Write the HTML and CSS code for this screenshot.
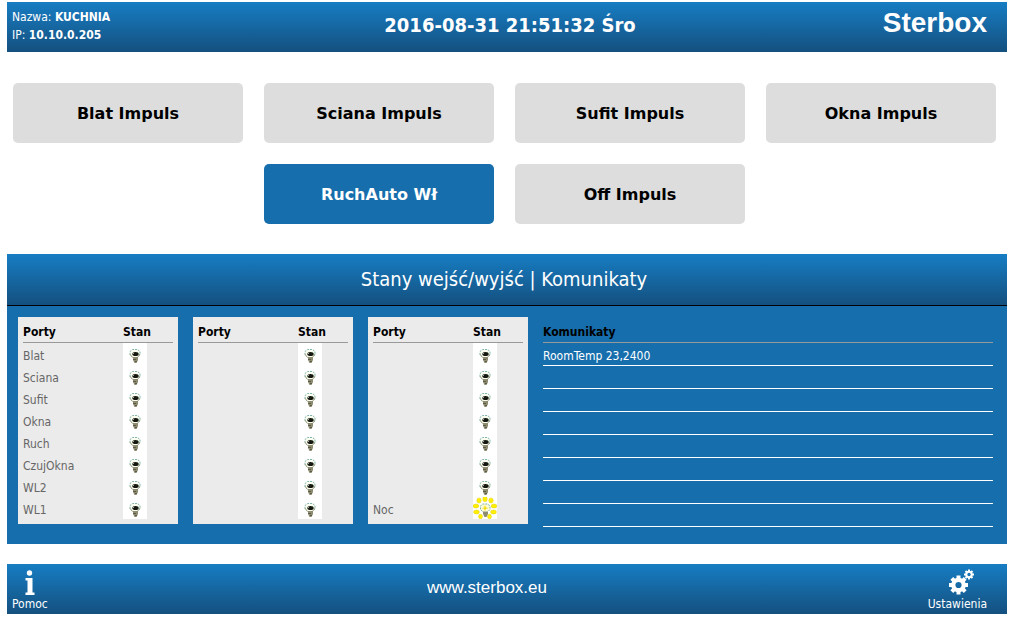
FILE: index.html
```html
<!DOCTYPE html>
<html lang="pl">
  <head>
    <meta charset="UTF-8" />
    <title>Sterbox - KUCHNIA</title>
    <link rel="stylesheet" href="styles.css">
  </head>
  <body>
    <!-- Bulb icons used in the port tables -->
    <svg class="icon-defs" aria-hidden="true">
      <symbol id="bulb" viewBox="0 -2 24 22">
        <path d="M9 12 L7 10 V6.500 L9.500 4.500 H14.500 L17 6.500 V10 L15 12" fill="#fbfdf0" stroke="#7fb5ad" stroke-dasharray="2 1" />
        <path d="M7 9 L9.500 12.500 H14.500 L17 9" fill="none" stroke="#aaa98c" />
        <ellipse cx="12.500" cy="9" rx="3.200" ry="2" fill="#15180f" />
        <path d="M10 9 l1 -1" stroke="#aaa" />
        <path d="M10 12 H15 V15 L13.500 18 H11.500 L10 15 Z" fill="#8d8b70" />
        <path d="M10 14.500 H13 M12 16.500 H14" stroke="#5c5b48" />
      </symbol>
      <symbol id="bulb-on" viewBox="0 0 24 22">
        <g fill="#fff000" stroke="#e3cf20" stroke-width="0.5">
          <ellipse cx="12" cy="2" rx="2.200" ry="2.800" />
          <ellipse cx="6" cy="3.500" rx="2.200" ry="2.600" />
          <ellipse cx="18" cy="3.500" rx="2.200" ry="2.600" />
          <ellipse cx="3" cy="9" rx="2.900" ry="2" />
          <ellipse cx="21" cy="9" rx="2.900" ry="2" />
          <ellipse cx="3.500" cy="15" rx="2.900" ry="2" />
          <ellipse cx="20.500" cy="15" rx="2.900" ry="2" />
          <ellipse cx="7.500" cy="19.500" rx="2" ry="2.300" />
          <ellipse cx="16.500" cy="19.500" rx="2" ry="2.300" />
        </g>
        <path d="M9.500 14.500 L7.500 12.500 V9 L9.500 7 H14.500 L17 9 V12.500 L15 14.500" fill="#fffbd0" stroke="#7fb5ad" stroke-dasharray="2 1" />
        <path d="M12 8 L13 10.500 L15.500 11 L13 12 L12 14 L11 12 L9 11 L11 10.500 Z" fill="#f2df1c" />
        <path d="M10 14.500 H15 V17 L13.500 20 H11.500 L10 17 Z" fill="#8d8b70" />
      </symbol>
    </svg>

    <header class="bar top-bar">
      <div class="device">
        <div>Nazwa: <b>KUCHNIA</b></div>
        <div>IP: <b>10.10.0.205</b></div>
      </div>
      <div class="clock">2016-08-31 21:51:32 Śro</div>
      <div class="brand">Sterbox</div>
    </header>

    <main>
      <div class="buttons">
        <button type="button" class="tile">Blat Impuls</button>
        <button type="button" class="tile">Sciana Impuls</button>
        <button type="button" class="tile">Sufit Impuls</button>
        <button type="button" class="tile">Okna Impuls</button>
        <button type="button" class="tile tile-on">RuchAuto Wł</button>
        <button type="button" class="tile">Off Impuls</button>
      </div>

      <section class="status">
        <h2 class="status-title">Stany wejść/wyjść | Komunikaty</h2>
        <div class="status-body">
          <!-- Ports 1-8 -->
          <div class="ports">
            <table>
              <thead>
                <tr><th>Porty</th><th class="state">Stan</th></tr>
              </thead>
              <tbody>
                <tr><td>Blat</td><td class="state"><svg class="bulb"><use href="#bulb" /></svg></td></tr>
                <tr><td>Sciana</td><td class="state"><svg class="bulb"><use href="#bulb" /></svg></td></tr>
                <tr><td>Sufit</td><td class="state"><svg class="bulb"><use href="#bulb" /></svg></td></tr>
                <tr><td>Okna</td><td class="state"><svg class="bulb"><use href="#bulb" /></svg></td></tr>
                <tr><td>Ruch</td><td class="state"><svg class="bulb"><use href="#bulb" /></svg></td></tr>
                <tr><td>CzujOkna</td><td class="state"><svg class="bulb"><use href="#bulb" /></svg></td></tr>
                <tr><td>WL2</td><td class="state"><svg class="bulb"><use href="#bulb" /></svg></td></tr>
                <tr><td>WL1</td><td class="state"><svg class="bulb"><use href="#bulb" /></svg></td></tr>
              </tbody>
            </table>
          </div>

          <!-- Ports 9-16 -->
          <div class="ports">
            <table>
              <thead>
                <tr><th>Porty</th><th class="state">Stan</th></tr>
              </thead>
              <tbody>
                <tr><td></td><td class="state"><svg class="bulb"><use href="#bulb" /></svg></td></tr>
                <tr><td></td><td class="state"><svg class="bulb"><use href="#bulb" /></svg></td></tr>
                <tr><td></td><td class="state"><svg class="bulb"><use href="#bulb" /></svg></td></tr>
                <tr><td></td><td class="state"><svg class="bulb"><use href="#bulb" /></svg></td></tr>
                <tr><td></td><td class="state"><svg class="bulb"><use href="#bulb" /></svg></td></tr>
                <tr><td></td><td class="state"><svg class="bulb"><use href="#bulb" /></svg></td></tr>
                <tr><td></td><td class="state"><svg class="bulb"><use href="#bulb" /></svg></td></tr>
                <tr><td></td><td class="state"><svg class="bulb"><use href="#bulb" /></svg></td></tr>
              </tbody>
            </table>
          </div>

          <!-- Ports 17-24 -->
          <div class="ports">
            <table>
              <thead>
                <tr><th>Porty</th><th class="state">Stan</th></tr>
              </thead>
              <tbody>
                <tr><td></td><td class="state"><svg class="bulb"><use href="#bulb" /></svg></td></tr>
                <tr><td></td><td class="state"><svg class="bulb"><use href="#bulb" /></svg></td></tr>
                <tr><td></td><td class="state"><svg class="bulb"><use href="#bulb" /></svg></td></tr>
                <tr><td></td><td class="state"><svg class="bulb"><use href="#bulb" /></svg></td></tr>
                <tr><td></td><td class="state"><svg class="bulb"><use href="#bulb" /></svg></td></tr>
                <tr><td></td><td class="state"><svg class="bulb"><use href="#bulb" /></svg></td></tr>
                <tr><td></td><td class="state"><svg class="bulb"><use href="#bulb" /></svg></td></tr>
                <tr><td>Noc</td><td class="state"><svg class="bulb"><use href="#bulb-on" /></svg></td></tr>
              </tbody>
            </table>
          </div>

          <table class="messages">
            <thead>
              <tr><th>Komunikaty</th></tr>
            </thead>
            <tbody>
              <tr><td>RoomTemp 23,2400</td></tr>
              <tr><td></td></tr>
              <tr><td></td></tr>
              <tr><td></td></tr>
              <tr><td></td></tr>
              <tr><td></td></tr>
              <tr><td></td></tr>
              <tr><td></td></tr>
            </tbody>
          </table>
        </div>
      </section>
    </main>

    <footer class="bar bottom-bar">
      <a href="#pomoc" class="nav-link help">
        <svg class="nav-icon" viewBox="0 0 34 28" fill="#fff">
          <circle cx="16.500" cy="4" r="2.700" />
          <path d="M12.500 9 H19.500 V23.500 H21.500 V26 H12.500 V23.500 H14.500 V11.500 H12.500 Z" />
        </svg>
        Pomoc
      </a>
      <a href="http://www.sterbox.eu" class="site">www.sterbox.eu</a>
      <a href="#ustawienia" class="nav-link settings">
        <svg class="nav-icon" viewBox="0 0 34 28" fill="none" stroke="#fff">
          <g transform="translate(8 -1)">
            <circle cx="10.500" cy="17" r="5.200" stroke-width="4.200" />
            <path d="M10.500 7.500 V11 M10.500 23 V26.500 M1 17 H4.500 M16.500 17 H20 M3.800 10.300 L6.300 12.800 M14.700 21.200 L17.200 23.700 M3.800 23.700 L6.300 21.200 M14.700 12.800 L17.200 10.300" stroke-width="4" />
            <circle cx="21" cy="6.500" r="2.700" stroke-width="2" />
            <path d="M21 1.500 V3.500 M21 9.500 V11.500 M16 6.500 H18 M24 6.500 H26 M17.500 3 L19 4.500 M23 8.500 L24.500 10 M17.500 10 L19 8.500 M23 4.500 L24.500 3" stroke-width="2" />
          </g>
        </svg>
        Ustawienia
      </a>
    </footer>
  </body>
</html>
```

FILE: styles.css
```css
body {
  margin: 2px 9px 5px 7px;
  background: #fff;
  font-family: "DejaVu Sans Condensed", Tahoma, sans-serif;
  font-size: 12px;
  color: #000;
}

a {
  color: #fff;
  text-decoration: none;
}

.icon-defs {
  display: none;
}

/* Top and bottom bars */
.bar {
  display: grid;
  height: 50px;
  color: #fff;
  background: linear-gradient(#177dc3, #14507f);
}

.top-bar {
  grid-template-columns: 200px 1fr 194px;
}

.device {
  padding: 6px 5px;
  line-height: 18px;
}

.clock {
  line-height: 46px;
  font-size: 20px;
  font-weight: bold;
  text-align: center;
}

.brand {
  padding-right: 20px;
  line-height: 42px;
  font-family: "Liberation Sans", Arial, sans-serif;
  font-size: 28px;
  font-weight: bold;
  text-align: right;
}

/* Control buttons */
.buttons {
  display: flex;
  flex-wrap: wrap;
  justify-content: center;
  gap: 21px;
  padding: 31px 11px 30px 6px;
}

.tile {
  flex: 0 0 calc((100% - 63px) / 4);
  height: 60px;
  padding: 0;
  border: none;
  border-radius: 5px;
  background: #ddd;
  color: #000;
  font-family: "DejaVu Sans", Tahoma, sans-serif;
  font-size: 16px;
  font-weight: bold;
  cursor: pointer;
}

.tile-on {
  background: #166eac;
  color: #fff;
}

/* Port states and messages */
.status {
  background: #166eac;
}

.status-title {
  margin: 0;
  padding-right: 6px;
  border-bottom: 1px solid #000;
  background: linear-gradient(#177dc3, #14507f);
  color: #fff;
  font-size: 20px;
  font-weight: normal;
  line-height: 51px;
  text-align: center;
}

.status-body {
  display: grid;
  grid-template-columns: 160px 160px 160px 1fr;
  align-items: start;
  gap: 15px;
  padding: 11px 14px 17px 11px;
}

.ports {
  padding: 0 5px 5px;
  background: #ebebeb;
}

table {
  width: 100%;
  border-spacing: 0;
  table-layout: fixed;
}

th {
  height: 20px;
  padding: 5px 0 0;
  border-bottom: 1px solid #999;
  line-height: 15px;
  text-align: left;
}

td {
  height: 18px;
  padding: 4px 0 0;
  line-height: 18px;
  color: #666;
}

th.state {
  width: 50px;
}

td.state {
  height: 22px;
  padding: 0;
}

.bulb {
  display: block;
  width: 24px;
  height: 22px;
  background: #fff;
}

.messages td {
  border-bottom: 1px solid #fff;
  color: #fff;
}

/* Footer */
.bottom-bar {
  grid-template-columns: 200px 1fr 240px;
  margin-top: 20px;
}

.nav-link {
  display: flex;
  flex-direction: column;
  align-items: center;
  padding: 5px 5px 0;
  line-height: 15px;
}

.nav-icon {
  width: 34px;
  height: 28px;
}

.help {
  justify-self: start;
}

.settings {
  justify-self: end;
  padding-right: 20px;
}

.site {
  font-family: "Liberation Sans", Arial, sans-serif;
  font-size: 17px;
  line-height: 48px;
  text-align: center;
}
```
